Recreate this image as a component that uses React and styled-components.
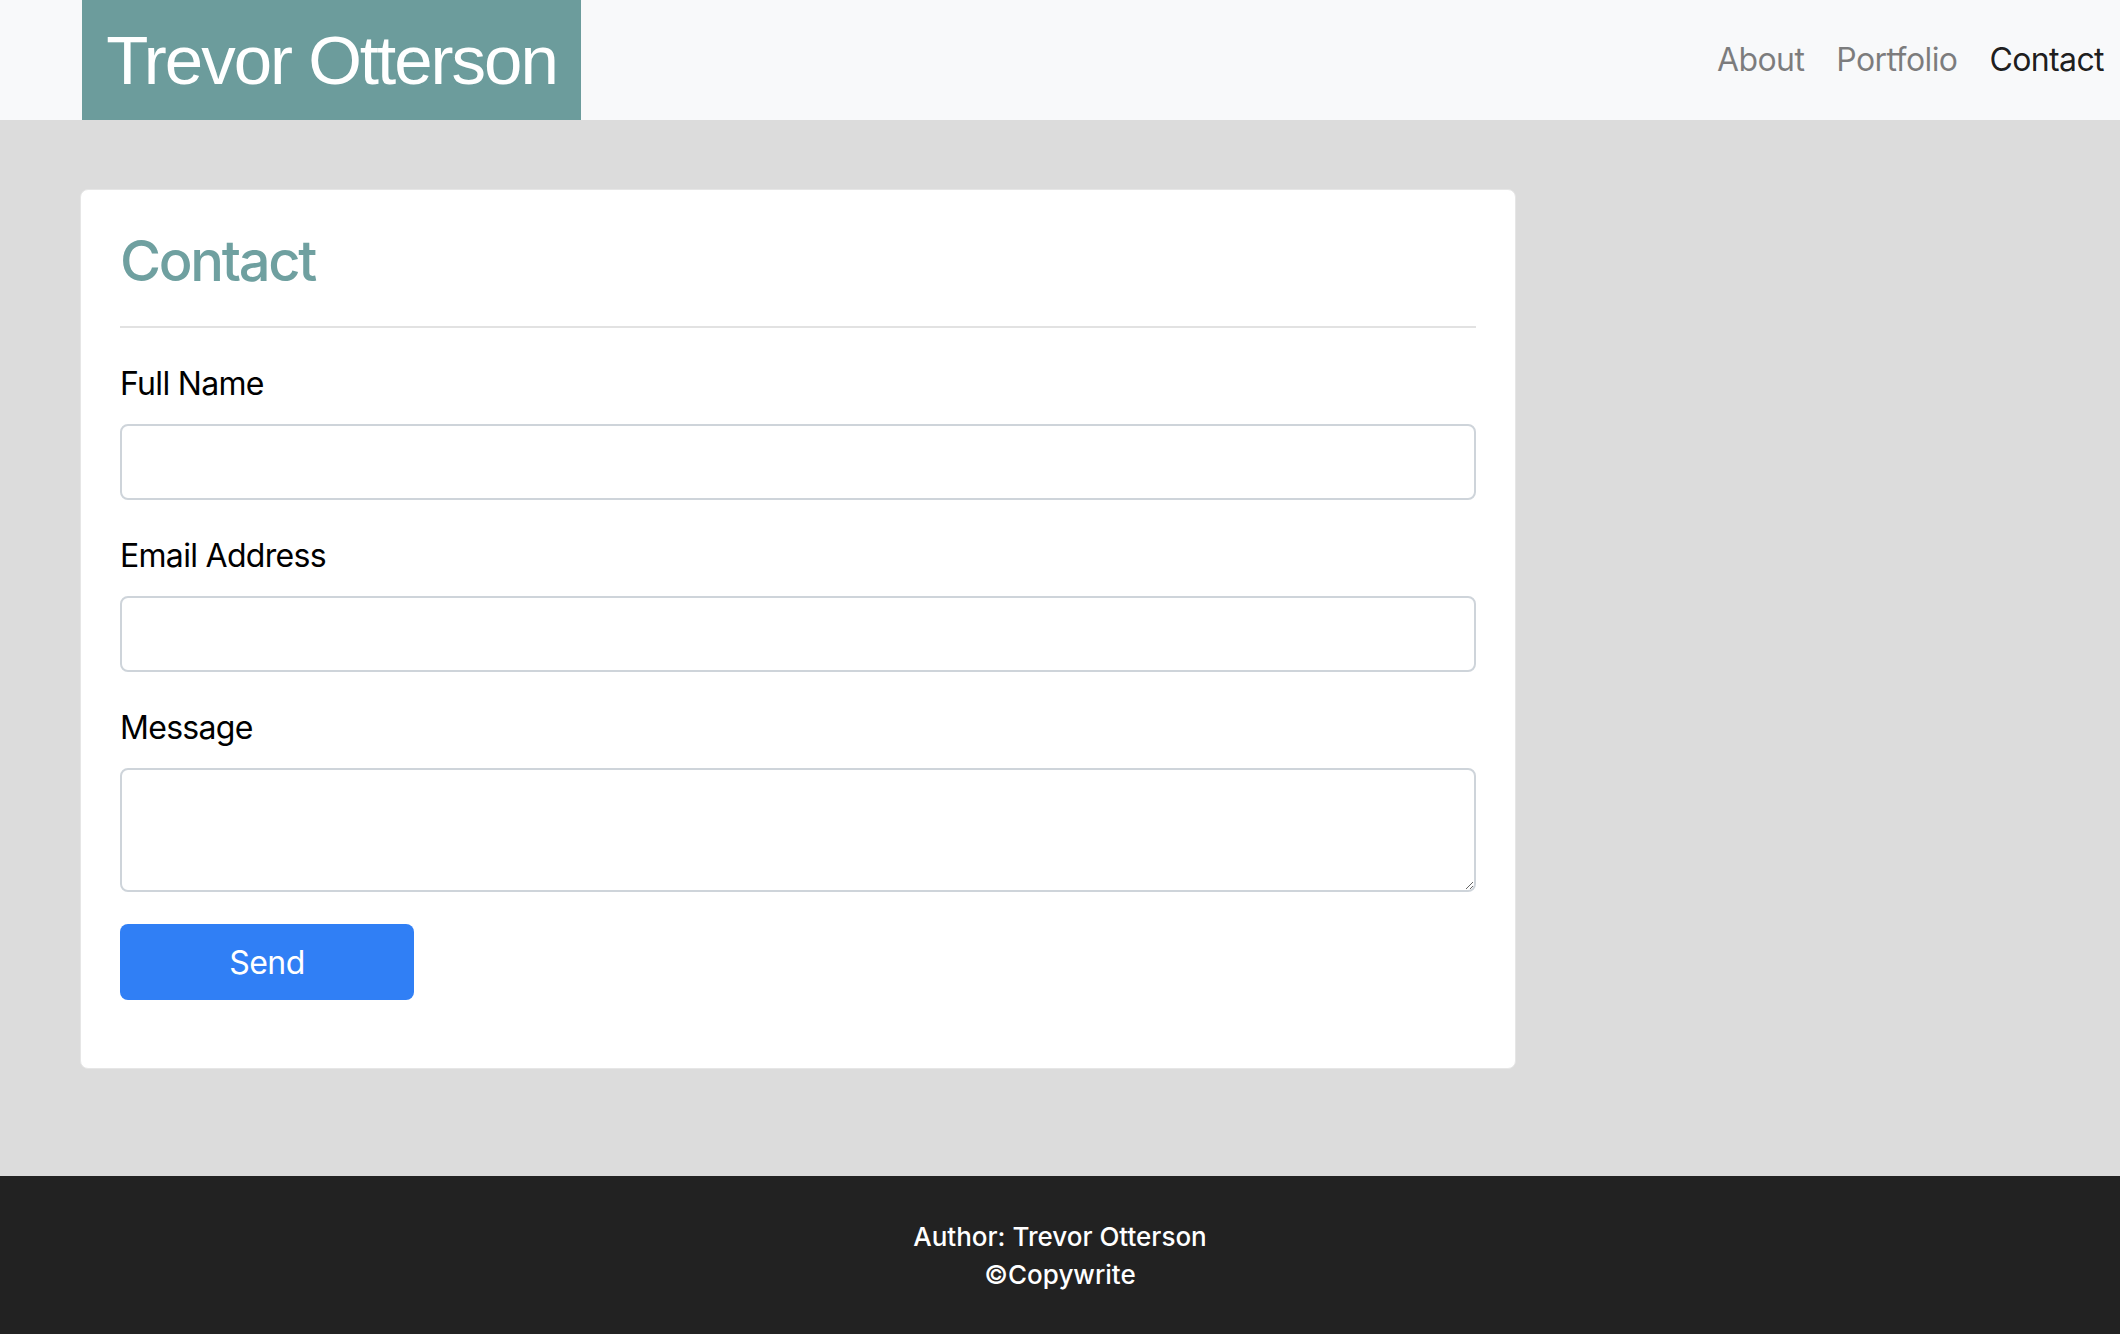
import styled, { createGlobalStyle } from "styled-components";

const GlobalStyle = createGlobalStyle`
  * {
    box-sizing: border-box;
  }
  body {
    margin: 0;
    font-family: Inter, "Noto Sans", sans-serif;
    color: #111;
    background: #dcdcdc;
  }
`;

const links = [
  { label: "About", active: false },
  { label: "Portfolio", active: false },
  { label: "Contact", active: true },
];

const App = () => {
  return (
    <Page>
      <GlobalStyle />
      <NavBar>
        <Logo>Trevor Otterson</Logo>
        <NavList>
          {links.map((l) => (
            <NavItem key={l.label}>
              <NavLink href="#" $active={l.active}>
                {l.label}
              </NavLink>
            </NavItem>
          ))}
        </NavList>
      </NavBar>

      <Main>
        <Card>
          <Heading>Contact</Heading>
          <Divider />
          <form onSubmit={(e) => e.preventDefault()}>
            <Field>
              <Label htmlFor="name">Full Name</Label>
              <Input id="name" type="text" />
            </Field>
            <Field>
              <Label htmlFor="email">Email Address</Label>
              <Input id="email" type="email" />
            </Field>
            <Field>
              <Label htmlFor="message">Message</Label>
              <TextArea id="message" rows={2} />
            </Field>
            <SendButton type="submit">Send</SendButton>
          </form>
        </Card>
      </Main>

      <Footer>
        <div>Author: Trevor Otterson</div>
        <div>©Copywrite</div>
      </Footer>
    </Page>
  );
};

const Page = styled.div`
  min-height: 100vh;
  display: flex;
  flex-direction: column;
`;

const NavBar = styled.nav`
  height: 120px;
  background-color: #f8f9fa;
  display: flex;
  align-items: center;
  justify-content: space-between;
  padding-left: 82px;
`;

const Logo = styled.div`
  height: 120px;
  width: 499px;
  background-color: #6c9c9c;
  color: #fff;
  display: flex;
  align-items: center;
  justify-content: center;
  font-family: "Liberation Sans", Arial, sans-serif;
  font-size: 69px;
  letter-spacing: -2px;
  white-space: nowrap;
`;

const NavList = styled.ul`
  display: flex;
  align-items: center;
  list-style: none;
  margin: 0;
  padding: 0;
`;

const NavItem = styled.li``;

const NavLink = styled.a`
  display: block;
  padding: 0 16px;
  font-size: 32px;
  line-height: 48px;
  letter-spacing: -0.6px;
  text-decoration: none;
  color: ${(p) => (p.$active ? "rgba(0, 0, 0, 0.9)" : "rgba(0, 0, 0, 0.5)")};
`;

const Main = styled.main`
  flex: 1;
  background-color: #dcdcdc;
  padding: 69px 0 107px 80px;
`;

const Card = styled.section`
  width: 1436px;
  background: #fff;
  border: 1px solid #e6e6e6;
  border-radius: 8px;
  padding: 38px 39px 68px 39px;
`;

const Heading = styled.h1`
  margin: 0;
  font-size: 56px;
  line-height: 67px;
  font-weight: 500;
  color: #6fa0a0;
  letter-spacing: -2.3px;
`;

const Divider = styled.hr`
  margin: 31px 0 32px;
  border: 0;
  border-top: 2px solid #e2e2e2;
`;

const Field = styled.div`
  margin-bottom: 32px;
`;

const Label = styled.label`
  display: block;
  font-size: 32px;
  line-height: 48px;
  letter-spacing: -0.7px;
  margin-bottom: 16px;
  color: #000;
`;

const Input = styled.input`
  display: block;
  width: 100%;
  height: 76px;
  border: 2px solid #ced4da;
  border-radius: 8px;
  padding: 12px 24px;
  font-family: inherit;
  font-size: 32px;
  background: #fff;
  outline: none;
`;

const TextArea = styled.textarea`
  display: block;
  width: 100%;
  height: 124px;
  border: 2px solid #ced4da;
  border-radius: 8px;
  padding: 12px 24px;
  font-family: inherit;
  font-size: 32px;
  line-height: 48px;
  background: #fff;
  outline: none;
  resize: vertical;
`;

const SendButton = styled.button`
  display: block;
  width: 294px;
  height: 76px;
  border: none;
  border-radius: 8px;
  background-color: #307ff5;
  color: #fff;
  font-family: inherit;
  font-size: 32px;
  letter-spacing: -0.5px;
  cursor: pointer;
`;

const Footer = styled.footer`
  background-color: #222;
  color: #fff;
  text-align: center;
  font-size: 26px;
  font-weight: 500;
  line-height: 38px;
  padding: 42px 0 40px;
`;

export default App;
